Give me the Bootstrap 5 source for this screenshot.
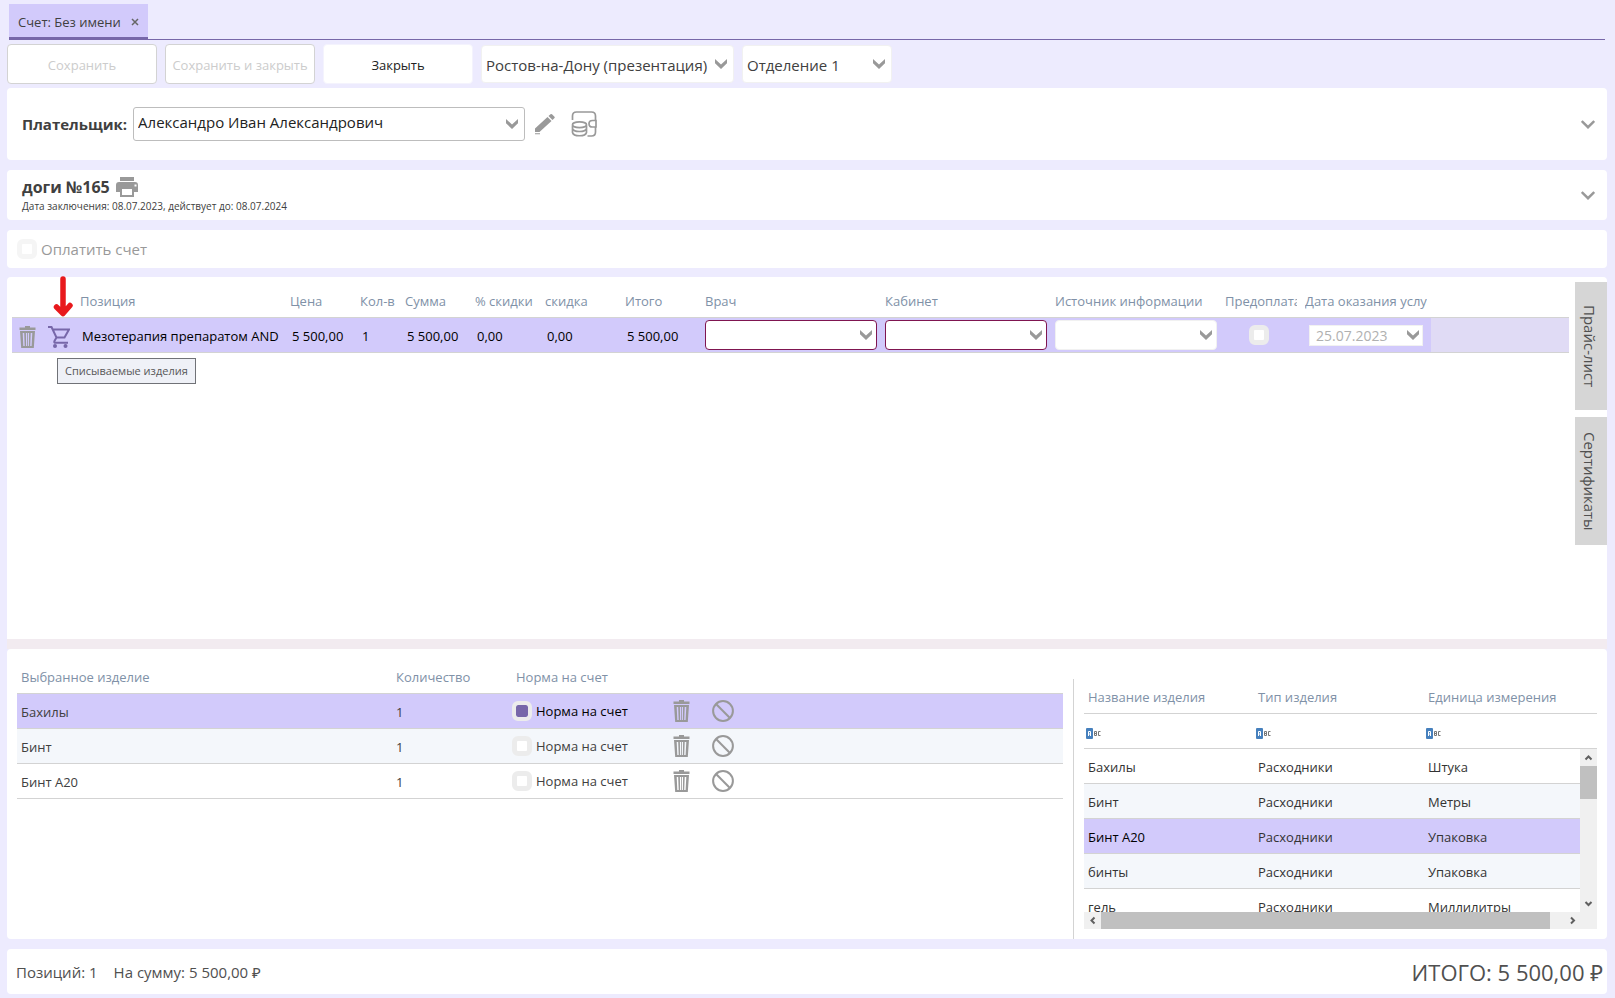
<!DOCTYPE html>
<html lang="ru">
<head>
<meta charset="utf-8">
<meta name="viewport" content="width=device-width, initial-scale=1">
<title>Счет: Без имени</title>
<link href="https://cdn.jsdelivr.net/npm/bootstrap@5.3.0/dist/css/bootstrap.min.css" rel="stylesheet">
<style>
:root{--page:#edebfe;--sel:#d2cafb;--accent:#7767a9;--ink:#404040;--head:#8091a7;--line:#d3d3d3;--icon:#999}
body{background:var(--page);color:var(--ink);font-family:"Open Sans","Noto Sans",sans-serif;font-size:13px;line-height:18px}
.app{min-height:100vh;padding:4px 8px 4px 7px}
.doc-tabs{border-bottom:1px solid var(--accent);margin:0 2px}
.doc-tab{background:var(--sel);border-bottom:3px solid var(--accent);height:36px;margin-bottom:-1px;padding:2px 9px 0;gap:10px}
.plain{background:none;border:0;padding:0;color:inherit;line-height:1;display:inline-flex}
.bar{height:40px;margin:4px 0}
.bar-btn{width:150px;height:40px;background:#fff;font-size:13px;padding:3px 0 0;border:1px solid #f4f3fd;border-radius:4px;color:#222}
.bar-btn:disabled{background:#fff;border-color:#d3d3d3;color:#ccc;opacity:1}
.pick{appearance:none;background:#fff url("data:image/svg+xml,%3Csvg xmlns='http://www.w3.org/2000/svg' width='12' height='10'%3E%3Cpath fill='%23999' d='M0 0l6 5.5L12 0v4.2L6 10 0 4.200z'/%3E%3C/svg%3E") no-repeat right 6px center;border:1px solid #f1f1f1;border-radius:4px;color:var(--ink);font-size:15px;line-height:20px;padding:0 18px 0 4px;width:100%}
.pick:disabled{opacity:1;background-color:#fff;color:#b0b0b0}
.bar .pick{height:38px;padding-top:2px}
.w-city{width:253px}.w-dept{width:150px}.w-payer{width:392px;margin-left:6px}
.w-payer .pick{height:34px;padding-bottom:4px;border:1px solid #bdbdbd;border-radius:3px;color:#222}
.panel{background:#fff;border-radius:4px}
.payer{height:72px;padding:0 12px 0 15px}
.wallet{margin-left:14px}
.deal{height:50px;margin:10px 0;padding:0 12px 0 15px}
.deal-name{font-size:16px;line-height:22px;gap:6px}
.deal-term{font-size:10px;line-height:16px}
.pay{height:38px;padding:0 10px}
.pay label{color:#999}
.t15{font-size:15px;line-height:20px}
.tick{appearance:none;flex:none;width:20px;height:20px;margin:0;border:5px solid #ececec;border-radius:6px;background:#fff;display:inline-block}
.tick:checked{border-width:4px;background:var(--accent) content-box}
.tick:disabled{border-color:#f5f5f5}
.invoice .tick{border-color:#ececec}
.invoice{margin-top:9px;border-bottom-left-radius:0;border-bottom-right-radius:0;padding-left:5px}
.lines{min-width:0;margin-right:6px}
.grid-t{table-layout:fixed;width:100%;border-collapse:separate;border-spacing:0}
.grid-t th{color:var(--head);font-weight:400;height:35px;padding:1px 4px 0;border-bottom:1px solid var(--line);white-space:nowrap;overflow:hidden}
.grid-t th span{display:block;overflow:hidden}
.grid-t td{height:35px;padding:2px 4px 0;border-bottom:1px solid var(--line);white-space:nowrap;overflow:hidden;line-height:18px}
.grid-t td.ico{padding-top:0}
.grid-t tr.alt td{background:#f4f7fb}
.grid-t tr.on td{background:var(--sel)}
.invoice .grid-t{color:#000}
.invoice .grid-t th{height:41px;padding-top:8px}
.invoice .grid-t td{padding:2px 6px 0}
.invoice .grid-t td.ctl{padding:0 4px}
.invoice .grid-t td.prepay{padding:0 10px 0 6px}
.invoice .grid-t td.over{overflow:visible;padding:3px 0 0}
.invoice .grid-t tr.on td.rest{background:#e0dbf5}
.invoice .pick{height:30px;display:block;background-position:right 4px center}
.invoice .pick.need{border-color:#7f1550}
.invoice .pick.date{height:21px;width:114px;margin:0 4px;border-radius:0;font-size:14px;padding-left:6px;background-position:right 3px center}
.hint{top:32px;left:15px;background:#eff1f7;border:1px solid #707277;color:#575757;font-size:11px;line-height:24px;padding:0 7px;white-space:nowrap;z-index:2}
.arrow{top:-52px;left:5px;z-index:2}
.cart{padding-left:6px}
.side{width:32px;padding-top:5px;gap:7px}
.side button{height:128px;background:#d6d6d6;writing-mode:vertical-rl;align-items:center;justify-content:center;font-size:15px;color:#505050;padding-right:4px}
.split{height:10px;background:#f2ebf0}
.goods{height:290px;flex:none}
.chosen{padding:10px 10px 0 10px;min-width:0}
.act{padding-left:18px!important}
.stock{width:534px;margin-top:30px;border-left:1px solid var(--line);padding-left:10px;padding-right:10px}
.stock .grid-t td{color:#333}
.stock .grid-t td.filter{padding:2px 2px 0}
.rows{height:163px}
.sb{background:#f0f0f0}
.sb-v{width:17px}.sb-h{height:17px}
.sb i{background:#c0c0c0;display:block}
.sb-v i{height:33px}.sb-h i{width:449px}
.sb svg{flex:none}
.foot{height:45px;margin-top:10px;padding:0 4px 0 9px;color:#505050}
.total{font-size:22px;line-height:30px}
</style>
</head>
<body>
<svg width="0" height="0" class="position-absolute" aria-hidden="true">
  <symbol id="trash" viewBox="0 0 17 22"><path fill="#999" fill-rule="evenodd" d="M6 0h5v1.500h5.500V4H.5V1.500H6zM1 5h15l-1.200 17H2.200zm2.700 2l.6 13h1.400l-.5-13zm3.200 0l.2 13h1V7zm2 0v13h1l.2-13zm2.800 0l-.5 13h1.400l.7-13z"/></symbol>
  <symbol id="ban" viewBox="0 0 22 22"><path d="M3.800 3.800l14.400 14.400" stroke="#999" stroke-width="2"/><circle cx="11" cy="11" r="9.900" fill="none" stroke="#999" stroke-width="2"/></symbol>
  <symbol id="chev" viewBox="0 0 14 9"><path d="M.8 1L7 7.200 13.200 1" fill="none" stroke="#999" stroke-width="2.400"/></symbol>
  <symbol id="tri" viewBox="0 0 17 17"><path d="M5.500 7l3 3 3-3" fill="none" stroke="#606060" stroke-width="2"/></symbol>
  <symbol id="abc" viewBox="0 0 15 11"><rect width="7" height="11" rx="1" fill="#4680bd"/><path d="M2.500 8V3.500h2V8M2.500 6h2" fill="none" stroke="#fff"/><path d="M8.500 3.500h2v4h-2zM8.500 5.500h2M14.500 3.500h-2v4h2" fill="none" stroke="#777"/></symbol>
</svg>

<div class="app d-flex flex-column">
  <nav class="doc-tabs d-flex" aria-label="Документы">
    <div class="doc-tab d-flex align-items-center"><span>Счет: Без имени</span>
      <button class="plain" type="button" aria-label="Закрыть вкладку"><svg width="8" height="8" viewBox="0 0 8 8"><path d="M1 1l6 6M7 1L1 7" stroke="#666" stroke-width="1.500"/></svg></button></div>
  </nav>

  <div class="bar d-flex align-items-center gap-2">
    <button class="btn bar-btn" type="button" disabled>Сохранить</button>
    <button class="btn bar-btn" type="button" disabled>Сохранить и закрыть</button>
    <button class="btn bar-btn" type="button">Закрыть</button>
    <div class="w-city"><select class="pick" aria-label="Филиал"><option>Ростов-на-Дону (презентация)</option></select></div>
    <div class="w-dept"><select class="pick" aria-label="Отделение"><option>Отделение 1</option></select></div>
  </div>

  <section class="panel payer d-flex align-items-center">
    <label class="t15 fw-bold" for="payer">Плательщик:</label>
    <div class="w-payer"><select id="payer" class="pick"><option>Александро Иван Александрович</option></select></div>
    <button class="plain ms-2" type="button" aria-label="Изменить"><svg width="24" height="22" viewBox="0 0 24 22"><path fill="#999" d="M2 15.500L14.500 4l4 4L6.500 19H2zM15.500 3l2-1.700q.8-.6 1.500 0l2.500 2.400q.6.700 0 1.400L19.500 7zM2 20.200h5v1H2z"/></svg></button>
    <button class="plain wallet" type="button" aria-label="Счет клиента"><svg width="26" height="26" viewBox="0 0 26 26" fill="none" stroke="#999" stroke-width="1.700"><path d="M1.500 9V5q0-4 4-4h15q4 0 4 4v4M25 9.500h-3.500q-3.500 0-3.500 3.300t3.500 3.200H25zM24.500 16v5q0 4-4 4h-4"/><ellipse cx="8.500" cy="13.800" rx="7" ry="2.900"/><path d="M1.500 14.500v3c1 4 13 4 14 0v-3M1.500 17.500v4c1 4.300 13 4.300 14 0v-4"/></svg></button>
    <button class="plain ms-auto" type="button" aria-label="Развернуть"><svg width="14" height="9"><use href="#chev"/></svg></button>
  </section>

  <section class="panel deal d-flex align-items-center">
    <div>
      <div class="deal-name d-flex align-items-center"><strong>доги №165</strong>
        <button class="plain" type="button" aria-label="Печать"><svg width="22" height="20" viewBox="0 0 22 20"><path fill="#999" fill-rule="evenodd" d="M4 0h14v4H4zM3 5h16q3 0 3 3v7h-4v5H4v-5H0V8q0-3 3-3zm15.500 2.500v2h2v-2zM6 12v6h10v-6z"/></svg></button></div>
      <div class="deal-term">Дата заключения: 08.07.2023, действует до: 08.07.2024</div>
    </div>
    <button class="plain ms-auto" type="button" aria-label="Развернуть"><svg width="14" height="9"><use href="#chev"/></svg></button>
  </section>

  <section class="panel pay d-flex align-items-center">
    <input class="tick" type="checkbox" id="pay" disabled><label class="t15 ms-1" for="pay">Оплатить счет</label>
  </section>

  <section class="panel invoice d-flex flex-grow-1">
    <div class="lines flex-grow-1">
      <table class="grid-t">
        <colgroup><col style="width:30px"><col style="width:34px"><col style="width:210px"><col style="width:70px"><col style="width:45px"><col style="width:70px"><col style="width:70px"><col style="width:80px"><col style="width:80px"><col style="width:180px"><col style="width:170px"><col style="width:170px"><col style="width:80px"><col style="width:130px"><col></colgroup>
        <thead><tr><th></th><th></th><th>Позиция</th><th>Цена</th><th>Кол-в</th><th>Сумма</th><th>% скидки</th><th>скидка</th><th>Итого</th><th>Врач</th><th>Кабинет</th><th>Источник информации</th><th><span>Предоплата</span></th><th><span>Дата оказания услуги</span></th><th></th></tr></thead>
        <tbody><tr class="on">
          <td class="over text-center"><button class="plain align-middle" type="button" aria-label="Удалить"><svg width="17" height="22"><use href="#trash"/></svg></button></td>
          <td class="over"><div class="cart d-flex position-relative">
            <button class="plain" type="button" aria-label="Списываемые изделия"><svg width="22" height="22" viewBox="0 0 22 22" fill="none" stroke="#7767a9" stroke-width="2"><path d="M0 1h3.500l5 10.500L6.500 15q-.8 1.800 1.200 1.800H20M8.500 11.500h8L21 3.500H4.800"/><g fill="#7767a9" stroke="none"><circle cx="7" cy="20" r="2"/><circle cx="17.500" cy="20" r="2"/></g></svg></button>
            <svg class="arrow position-absolute" width="28" height="44" viewBox="0 0 28 44"><path d="M16 5v31M9.500 33l6.500 6.500 7-8" fill="none" stroke="#e8191c" stroke-width="5.500" stroke-linecap="round" stroke-linejoin="round"/></svg>
            <div class="hint position-absolute" role="tooltip">Списываемые изделия</div></div></td>
          <td>Мезотерапия препаратом AND</td><td>5 500,00</td><td>1</td><td>5 500,00</td><td>0,00</td><td>0,00</td><td>5 500,00</td>
          <td class="ctl"><select class="pick need" aria-label="Врач"><option></option></select></td>
          <td class="ctl"><select class="pick need" aria-label="Кабинет"><option></option></select></td>
          <td class="ctl"><select class="pick" aria-label="Источник информации"><option></option></select></td>
          <td class="prepay text-center"><input class="tick align-middle" type="checkbox" aria-label="Предоплата" disabled></td>
          <td class="ctl"><select class="pick date" aria-label="Дата оказания услуги" disabled><option>25.07.2023</option></select></td>
          <td class="rest"></td>
        </tr></tbody>
      </table>
    </div>
    <div class="side d-flex flex-column flex-shrink-0">
      <button class="plain" type="button">Прайс-лист</button>
      <button class="plain" type="button">Сертификаты</button>
    </div>
  </section>

  <div class="split"></div>

  <section class="panel goods d-flex">
    <div class="chosen flex-grow-1">
      <table class="grid-t">
        <colgroup><col style="width:375px"><col style="width:120px"><col style="width:140px"><col style="width:42px"><col></colgroup>
        <thead><tr><th>Выбранное изделие</th><th>Количество</th><th>Норма на счет</th><th></th><th></th></tr></thead>
        <tbody>
          <tr class="on"><td>Бахилы</td><td>1</td><td class="px-0 ico"><label class="d-flex align-items-center gap-1 text-black"><input class="tick" type="checkbox" checked>Норма на счет</label></td><td class="text-end ico"><button class="plain align-middle" type="button" aria-label="Удалить"><svg width="17" height="22"><use href="#trash"/></svg></button></td><td class="act ico"><button class="plain align-middle" type="button" aria-label="Отменить"><svg width="22" height="22"><use href="#ban"/></svg></button></td></tr>
          <tr class="alt"><td>Бинт</td><td>1</td><td class="px-0 ico"><label class="d-flex align-items-center gap-1"><input class="tick" type="checkbox">Норма на счет</label></td><td class="text-end ico"><button class="plain align-middle" type="button" aria-label="Удалить"><svg width="17" height="22"><use href="#trash"/></svg></button></td><td class="act ico"><button class="plain align-middle" type="button" aria-label="Отменить"><svg width="22" height="22"><use href="#ban"/></svg></button></td></tr>
          <tr><td>Бинт А20</td><td>1</td><td class="px-0 ico"><label class="d-flex align-items-center gap-1"><input class="tick" type="checkbox">Норма на счет</label></td><td class="text-end ico"><button class="plain align-middle" type="button" aria-label="Удалить"><svg width="17" height="22"><use href="#trash"/></svg></button></td><td class="act ico"><button class="plain align-middle" type="button" aria-label="Отменить"><svg width="22" height="22"><use href="#ban"/></svg></button></td></tr>
        </tbody>
      </table>
    </div>
    <div class="stock flex-shrink-0">
      <table class="grid-t">
        <colgroup><col style="width:170px"><col style="width:170px"><col></colgroup>
        <thead><tr><th>Название изделия</th><th>Тип изделия</th><th>Единица измерения</th></tr></thead>
        <tbody><tr><td class="filter"><button class="plain align-middle" type="button" aria-label="Фильтр"><svg width="15" height="11"><use href="#abc"/></svg></button></td><td class="filter"><button class="plain align-middle" type="button" aria-label="Фильтр"><svg width="15" height="11"><use href="#abc"/></svg></button></td><td class="filter"><button class="plain align-middle" type="button" aria-label="Фильтр"><svg width="15" height="11"><use href="#abc"/></svg></button></td></tr></tbody>
      </table>
      <div class="d-flex rows">
        <div class="flex-grow-1 overflow-hidden">
          <table class="grid-t">
            <colgroup><col style="width:170px"><col style="width:170px"><col></colgroup>
            <tbody>
              <tr><td>Бахилы</td><td>Расходники</td><td>Штука</td></tr>
              <tr class="alt"><td>Бинт</td><td>Расходники</td><td>Метры</td></tr>
              <tr class="on"><td class="text-black">Бинт А20</td><td>Расходники</td><td>Упаковка</td></tr>
              <tr class="alt"><td>бинты</td><td>Расходники</td><td>Упаковка</td></tr>
              <tr><td>гель</td><td>Расходники</td><td>Миллилитры</td></tr>
            </tbody>
          </table>
        </div>
        <div class="sb sb-v d-flex flex-column flex-shrink-0"><svg width="17" height="17" viewBox="0 0 17 17"><path d="M5.500 10.500l3-3 3 3" fill="none" stroke="#606060" stroke-width="2"/></svg><i></i><svg class="mt-auto" width="17" height="17"><use href="#tri"/></svg></div>
      </div>
      <div class="sb sb-h d-flex"><svg width="17" height="17" viewBox="0 0 17 17"><path d="M10.500 5.500l-3 3 3 3" fill="none" stroke="#606060" stroke-width="2"/></svg><i></i><svg class="ms-auto me-3" width="17" height="17" viewBox="0 0 17 17"><path d="M7 5.500l3 3-3 3" fill="none" stroke="#606060" stroke-width="2"/></svg></div>
    </div>
  </section>

  <footer class="panel foot d-flex align-items-center">
    <span class="t15 me-3">Позиций: 1</span><span class="t15">На сумму: 5 500,00 ₽</span>
    <span class="total ms-auto">ИТОГО: 5 500,00 ₽</span>
  </footer>
</div>
<script src="https://cdn.jsdelivr.net/npm/bootstrap@5.3.0/dist/js/bootstrap.bundle.min.js"></script>
</body>
</html>
